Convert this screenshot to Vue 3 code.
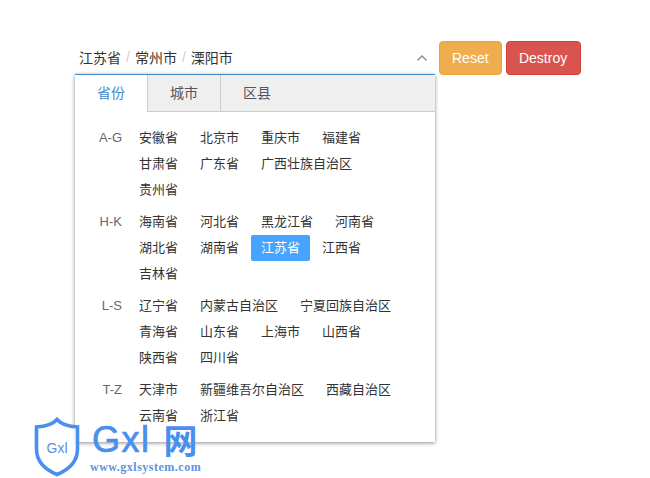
<template>
  <div class="page">
    <div class="bar">
      <div class="picker">
        <div class="value">
          <template v-for="(name, i) in selected" :key="name">
            <span v-if="i" class="sep">/</span>
            <span>{{ name }}</span>
          </template>
          <svg class="caret" width="12" height="8" viewBox="0 0 12 8">
            <path d="M1.5 6.5 L6 2 L10.5 6.5" fill="none" stroke="#888" stroke-width="1.3" />
          </svg>
        </div>
        <div class="dropdown">
          <div class="tabs">
            <div
              v-for="(tab, i) in tabs"
              :key="tab"
              class="tab"
              :class="{ active: i === 0 }"
            >{{ tab }}</div>
          </div>
          <div class="groups">
            <div v-for="group in groups" :key="group.label" class="group">
              <div class="label">{{ group.label }}</div>
              <div class="items">
                <a
                  v-for="item in group.items"
                  :key="item"
                  class="item"
                  :class="{ on: item === '江苏省' }"
                >{{ item }}</a>
              </div>
            </div>
          </div>
        </div>
      </div>
      <button class="btn reset">Reset</button>
      <button class="btn destroy">Destroy</button>
    </div>

    <div class="mark">
      <svg class="shield" width="46" height="60" viewBox="0 0 46 60">
        <path d="M23 2.5 C27 7 33 9.5 43.5 10 V32 C43.5 45 34 53 23 57.5 C12 53 2.5 45 2.5 32 V10 C13 9.5 19 7 23 2.5 Z" fill="#fff" fill-opacity="0.75" stroke="#4a8fef" stroke-width="3.6" />
      </svg>
      <span class="shield-text">Gxl</span>
      <div class="brand">
        <div class="brand-top">
          <span class="gxl">Gxl</span>
          <span class="wang">网</span>
        </div>
        <div class="url">www.gxlsystem.com</div>
      </div>
    </div>
  </div>
</template>

<script setup>
const selected = ['江苏省', '常州市', '溧阳市']
const tabs = ['省份', '城市', '区县']

const groups = [
  { label: 'A-G', items: ['安徽省', '北京市', '重庆市', '福建省', '甘肃省', '广东省', '广西壮族自治区', '贵州省'] },
  { label: 'H-K', items: ['海南省', '河北省', '黑龙江省', '河南省', '湖北省', '湖南省', '江苏省', '江西省', '吉林省'] },
  { label: 'L-S', items: ['辽宁省', '内蒙古自治区', '宁夏回族自治区', '青海省', '山东省', '上海市', '山西省', '陕西省', '四川省'] },
  { label: 'T-Z', items: ['天津市', '新疆维吾尔自治区', '西藏自治区', '云南省', '浙江省'] },
]
</script>

<style>
html, body {
  background: #fff;
  overflow: hidden;
}
</style>

<style scoped>
.page {
  position: relative;
  width: 650px;
  height: 478px;
  padding: 41px 0 0 75px;
  box-sizing: border-box;
  font-family: "Liberation Sans", "Noto Sans CJK SC", sans-serif;
  font-size: 13px;
  color: #333;
  overflow: hidden;
}

.bar {
  display: flex;
  align-items: flex-start;
  gap: 4px;
}

.picker {
  position: relative;
  width: 360px;
  height: 34px;
}

.value {
  display: flex;
  align-items: center;
  height: 33px;
  padding-left: 4px;
  padding-bottom: 2px;
  box-sizing: border-box;
  font-size: 14px;
  color: #333;
}

.sep {
  margin: 0 5px;
  color: #ccc;
}

.caret {
  margin-left: auto;
  margin-right: 7px;
  margin-top: 3px;
}

.dropdown {
  position: absolute;
  top: 33px;
  left: 0;
  width: 360px;
  height: 368px;
  box-sizing: border-box;
  background: #fff;
  border-top: 1px solid #428bca;
  box-shadow: 0 1px 4px rgba(0, 0, 0, 0.45);
}

.tabs {
  display: flex;
  height: 37px;
  background: #efefef;
  border-bottom: 1px solid #ccc;
  box-sizing: border-box;
}

.tab {
  width: 72px;
  line-height: 36px;
  text-align: center;
  font-size: 14px;
  color: #555;
  border-right: 1px solid #ccc;
}

.tab:last-child {
  border-right: 0;
}

.tab.active {
  height: 37px;
  background: #fff;
  color: #428bca;
}

.groups {
  display: flex;
  flex-direction: column;
  gap: 6px;
  padding-top: 13px;
}

.group {
  display: flex;
}

.label {
  width: 54px;
  padding-right: 7px;
  box-sizing: border-box;
  line-height: 26px;
  text-align: right;
  color: #666;
  font-size: 13px;
}

.items {
  display: flex;
  flex-wrap: wrap;
  width: 290px;
}

.item {
  height: 26px;
  line-height: 26px;
  padding: 0 10px;
  margin-right: 2px;
  border-radius: 2px;
  color: #333;
}

.item.on {
  background: #46a4ff;
  color: #fff;
}

.btn {
  height: 34px;
  padding: 0 12px;
  border: 1px solid;
  border-radius: 4px;
  color: #fff;
  font-family: inherit;
  font-size: 14px;
}

.reset {
  background: #f0ad4e;
  border-color: #eea236;
}

.destroy {
  width: 75px;
  background: #d9534f;
  border-color: #d43f3a;
}

.mark {
  position: absolute;
  left: 34px;
  top: 417px;
  width: 175px;
  height: 61px;
}

.shield {
  position: absolute;
  left: 0;
  top: 0;
}

.shield-text {
  position: absolute;
  left: 0;
  width: 46px;
  top: 23px;
  text-align: center;
  font-size: 14px;
  color: #5b8fe0;
}

.brand {
  position: absolute;
  left: 56px;
  top: 3px;
  color: #4a8fef;
}

.brand-top {
  display: flex;
  align-items: center;
  height: 40px;
}

.gxl {
  margin-left: 2px;
  font-size: 36px;
  letter-spacing: 1.5px;
  -webkit-text-stroke: 0.7px #4a8fef;
}

.wang {
  margin-left: 13px;
  font-size: 34px;
  line-height: 34px;
  font-weight: 700;
  font-family: "Noto Sans CJK SC", sans-serif;
}

.url {
  margin-top: 0;
  font-family: "Liberation Serif", serif;
  font-size: 12px;
  font-weight: 700;
  letter-spacing: 0.5px;
  color: #5f93e0;
  white-space: nowrap;
}
</style>
